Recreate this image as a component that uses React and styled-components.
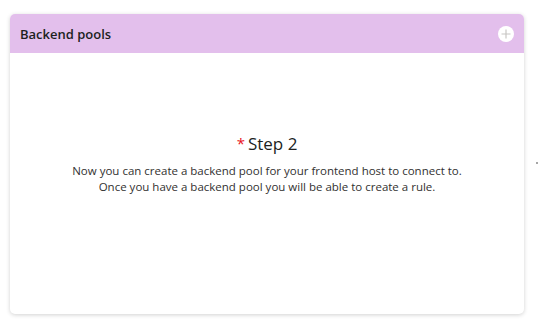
import styled, { createGlobalStyle } from "styled-components";

const GlobalStyle = createGlobalStyle`
  html, body { margin: 0; padding: 0; background: #ffffff; }
  body {
    font-family: "Open Sans", "Noto Sans", "Liberation Sans", sans-serif;
    color: #323130;
  }
`;

const Page = styled.div`
  position   : relative ;
  width      : 538px    ;
  height     : 324px    ;
  padding    : 14px 14px 0 10px ;
  box-sizing : border-box ;
`;

const Card = styled.section`
  display        : flex    ;
  flex-direction : column  ;
  width          : 514px   ;
  height         : 300px   ;
  background     : #ffffff ;
  border-radius  : 5px     ;
  box-shadow     : 0 1px 4px rgba(0, 0, 0, 0.18) ;
  overflow       : hidden  ;
`;

const Header = styled.header`
  display         : flex          ;
  align-items     : center        ;
  justify-content : space-between ;
  height          : 39px          ;
  padding         : 0 10px 0 10px ;
  background      : #e3bfec       ;
`;

const Title = styled.h2`
  margin      : 0       ;
  font-size   : 13px    ;
  font-weight : 600     ;
  color       : #201f1e ;
`;

const AddButton = styled.button`
  width         : 16px    ;
  height        : 16px    ;
  padding       : 0       ;
  border        : none    ;
  border-radius : 50%     ;
  background    : #ffffff ;
  display       : flex    ;
  align-items   : center  ;
  justify-content : center ;
`;

const Body = styled.div`
  flex           : 1      ;
  display        : flex   ;
  flex-direction : column ;
  align-items    : center ;
  padding-top    : 78px   ;
  text-align     : center ;
`;

const StepTitle = styled.h3`
  margin      : 0       ;
  font-size   : 17px    ;
  font-weight : 400     ;
  line-height : 24px    ;
  color       : #201f1e ;
`;

const Required = styled.span`
  color          : #e81123 ;
  margin-right   : 3px     ;
  font-size      : 15px    ;
  vertical-align : 1px     ;
`;

const Text = styled.p`
  margin      : 7px 0 0 ;
  font-size   : 11.5px  ;
  line-height : 16px    ;
  color       : #323130 ;
`;

const EdgeMark = styled.span`
  position   : absolute ;
  left       : 536px    ;
  top        : 162px    ;
  width      : 2px      ;
  height     : 2px      ;
  background : #a6a6a6  ;
`;

const PlusIcon = () => (
  <svg width="12" height="12" viewBox="0 0 12 12">
    <path d="M6 1.5v9M1.5 6h9" stroke="#c8c6c4" strokeWidth="1.2" />
  </svg>
);

export default function App() {
  return (
    <>
      <GlobalStyle />
      <Page>
        <Card>
          <Header>
            <Title>Backend pools</Title>
            <AddButton aria-label="Add backend pool">
              <PlusIcon />
            </AddButton>
          </Header>
          <Body>
            <StepTitle>
              <Required>*</Required>Step 2
            </StepTitle>
            <Text>
              Now you can create a backend pool for your frontend host to connect to.
              <br />
              Once you have a backend pool you will be able to create a rule.
            </Text>
          </Body>
        </Card>
        <EdgeMark />
      </Page>
    </>
  );
}
